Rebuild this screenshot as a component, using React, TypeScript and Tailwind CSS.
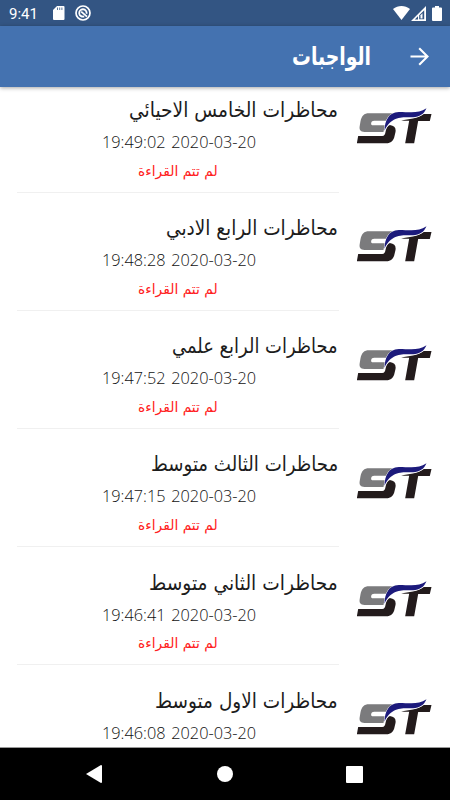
import { useLayoutEffect, useRef, useState } from 'react';

const lectures = [
  { title: 'محاظرات الخامس الاحيائي', time: '19:49:02', width: 209, unread: true },
  { title: 'محاظرات الرابع الادبي', time: '19:48:28', width: 172, unread: true },
  { title: 'محاظرات الرابع علمي', time: '19:47:52', width: 166, unread: true },
  { title: 'محاظرات الثالث متوسط', time: '19:47:15', width: 187, unread: true },
  { title: 'محاظرات الثاني متوسط', time: '19:46:41', width: 189, unread: true },
  { title: 'محاظرات الاول متوسط', time: '19:46:08', width: 183, unread: false },
];

/** Single line of text, condensed horizontally to the given width. */
function FitText({ text, width, className }: { text: string; width: number; className: string }) {
  const ref = useRef<HTMLSpanElement>(null);
  const [scale, setScale] = useState(1);
  useLayoutEffect(() => {
    if (ref.current) setScale(width / ref.current.offsetWidth);
  }, [text, width]);
  return (
    <div className="flex justify-start" style={{ width }}>
      <span
        ref={ref}
        className={`block shrink-0 whitespace-nowrap ${className}`}
        style={{ transform: `scaleX(${scale})` }}
      >
        {text}
      </span>
    </div>
  );
}

function Logo() {
  return (
    <svg viewBox="51.5 51 225 112" className="h-[37.33px] w-[75px]">
      <path
        fill="#7b7b7d"
        d="M158 70H88C72 70 66 78 62 94L60 106C57 120 62 126 74 126H131C132 117 136 110 142 106H100C95 106 93 103 94 99C95 94 98 92 103 92H150Z"
      />
      <path
        fill="#231b1c"
        d="M137 126C139 115 143 108 150 105C164 107 169 114 167 126L164 139C161 153 153 160 139 160H51L55 138H127C134 138 136 133 137 126Z"
      />
      <path fill="#231b1c" d="M184 92C206 87 234 86 252 72H275L270 93H235L223 160H196L208 92Z" />
      <path
        fill="#1c1a7c"
        stroke="white"
        strokeWidth="3"
        paintOrder="stroke"
        d="M134 122C135 94 145 67 177 66C211 66 235 72 260 55C252 73 239 81 220 82C190 83 156 76 134 122Z"
      />
    </svg>
  );
}

function StatusBar() {
  return (
    <div className="flex h-[26px] shrink-0 items-center bg-[#335583] text-white">
      <span className="ml-[9px] w-[29px] pt-[2px] font-[Roboto] text-[15px] leading-[26px]">9:41</span>
      <svg viewBox="0 0 12 14" className="ml-[15px] h-[14px] w-[12px]">
        <path fill="white" d="M4 0H10.5Q11.5 0 11.5 1V13Q11.5 14 10.5 14H1Q0 14 0 13V4Z" />
        <path stroke="#335583" strokeWidth="0.8" d="M4.5 1.5V4M6.7 1.5V4M8.9 1.5V4" />
      </svg>
      <svg viewBox="0 0 16 16" className="ml-[9.5px] h-4 w-4" fill="none" stroke="white">
        <circle cx="8" cy="8" r="7" strokeWidth="1.7" />
        <path strokeWidth="1.8" d="M9.2 11.4A3.7 3.7 0 1 1 11.5 8.8M6.2 6.6L12 11.6" />
      </svg>
      <svg viewBox="0 0 17 14" className="ml-[302.5px] h-[14px] w-[17px]">
        <path fill="white" d="M0 3C5-1 12-1 17 3L8.5 14Z" />
      </svg>
      <svg viewBox="0 0 15 15" className="ml-[1px] h-[15px] w-[15px]">
        <path fill="white" fillRule="evenodd" d="M0 15L15 0V15ZM8.2 13.2H13.2V4.2L8.2 9.2Z" />
        <path fill="#335583" d="M3.8 13.4L7 10.2V13.4Z" />
        <path fill="white" d="M9.5 12.4V9.2L11.5 7.2V12.4Z" />
      </svg>
      <svg viewBox="0 0 10 15" className="ml-[6px] h-[15px] w-[10px]">
        <path fill="white" d="M3 0H7V1.5H9Q10 1.5 10 2.5V14Q10 15 9 15H1Q0 15 0 14V2.5Q0 1.5 1 1.5H3Z" />
      </svg>
    </div>
  );
}

export default function App() {
  return (
    <div className="flex h-[800px] w-[450px] flex-col overflow-hidden bg-white">
      <StatusBar />
      <header
        dir="rtl"
        className="z-10 flex h-[61px] shrink-0 items-center bg-[#4472b0] pr-[21px] text-white shadow-[0_1px_4px_rgba(0,0,0,0.35)]"
      >
        <svg viewBox="0 0 19 19" className="h-[19px] w-[19px]" fill="none" stroke="white" strokeWidth="2.1">
          <path d="M.5 9.5H17M9.2 1.2L17.5 9.5L9.2 17.8" />
        </svg>
        <div className="mr-[39px]">
          <FitText
            text="الواجبات"
            width={79}
            className="origin-right font-['DejaVu_Sans',sans-serif] text-[25px] leading-[32px] font-bold"
          />
        </div>
      </header>
      <main dir="rtl" className="min-h-0 flex-1 overflow-hidden">
        <div className="-mt-[12.2px]">
          {lectures.map((item) => (
            <div key={item.time} className="flex h-[118.1px] pr-[18px]">
              <div className="w-[75px] shrink-0 pt-[32.5px]">
                <Logo />
              </div>
              <div className="mr-[18px] flex w-[322px] flex-col items-center border-b border-[#f0f0f0]">
                <div className="w-full pt-[19.4px] pr-px">
                  <FitText
                    text={item.title}
                    width={item.width}
                    className="origin-right font-['DejaVu_Sans',sans-serif] text-[20.5px] leading-[32px] text-[#1c1c1c]"
                  />
                </div>
                <div dir="ltr" className="mt-[4px] ml-[2px]">
                  <FitText
                    text={`${item.time} 2020-03-20`}
                    width={154}
                    className="origin-left font-['Open_Sans',sans-serif] text-[16.5px] leading-[24px] font-light text-[#111] [word-spacing:1.5px]"
                  />
                </div>
                {item.unread && (
                  <div className="mt-[6.3px]">
                    <FitText
                      text="لم تتم القراءة"
                      width={80}
                      className="origin-right font-['DejaVu_Sans',sans-serif] text-[14px] leading-[20px] text-[#ff2020]"
                    />
                  </div>
                )}
              </div>
            </div>
          ))}
        </div>
      </main>
      <nav className="flex h-[53px] shrink-0 items-center justify-between border-t border-[#999] bg-black pr-[87px] pl-[86px]">
        <svg viewBox="0 0 16 18" className="h-[18px] w-[16px]">
          <path fill="white" d="M0 9L15 0Q16 0 16 1V17Q16 18 15 18Z" />
        </svg>
        <div className="ml-[2px] h-4 w-4 rounded-full bg-white" />
        <div className="h-[17px] w-[17px] rounded-[1px] bg-white" />
      </nav>
    </div>
  );
}
